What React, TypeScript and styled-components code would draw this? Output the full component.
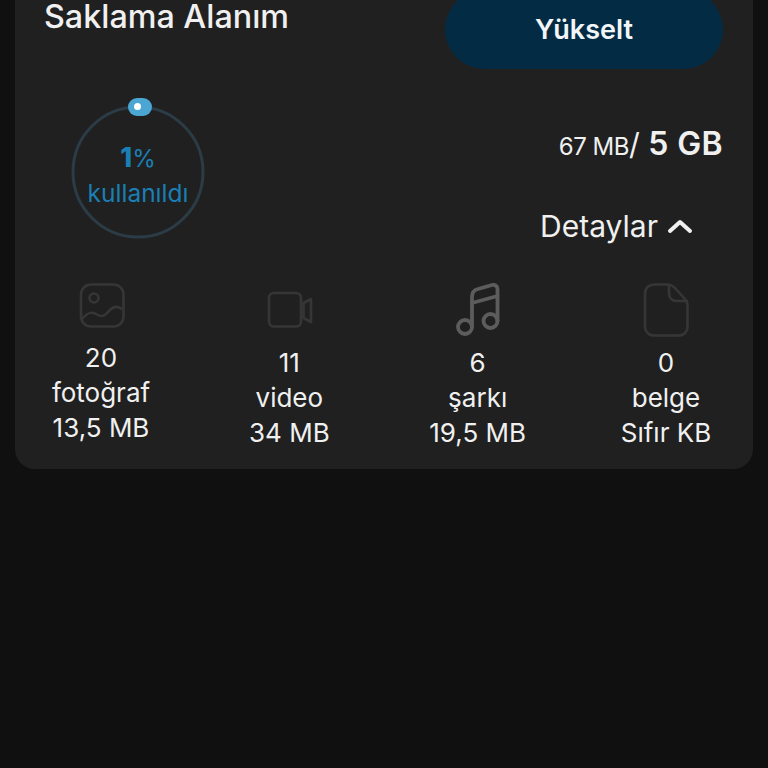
import React from 'react';
import styled, { createGlobalStyle } from 'styled-components';

const GlobalStyle = createGlobalStyle`
  html, body {
    margin: 0;
    height: 768px;
    overflow: hidden;
    background: #101010;
    font-family: Inter, "Noto Sans", sans-serif;
  }
`;

const Page = styled.div`
  height: 768px;
  padding: 0 15px;
  box-sizing: border-box;
  overflow: hidden;
`;

const Card = styled.section`
  margin-top: -30px;
  height: 499px;
  box-sizing: border-box;
  padding-top: 20px;
  background: #202020;
  border-radius: 20px;
  color: #f0f0f0;
`;

const Header = styled.div`
  display: flex;
  justify-content: space-between;
  align-items: flex-start;
  padding: 0 30px 0 29px;
`;

const Title = styled.h2`
  margin: 11px 0 0;
  font-size: 32.3px;
  line-height: 32px;
  font-weight: 500;
  color: #f0f0f0;
`;

const UpgradeButton = styled.button`
  width: 278px;
  height: 79px;
  border: none;
  border-radius: 40px;
  background: #032c44;
  color: #f2f6f8;
  font-family: inherit;
  font-size: 27px;
  font-weight: 600;
  padding: 0;
`;

const UsageRow = styled.div`
  display: flex;
  justify-content: space-between;
  align-items: flex-start;
  padding: 36px 30px 0 56px;
`;

const Gauge = styled.div`
  position: relative;
  width: 134px;
  height: 134px;
  box-sizing: border-box;
  padding-top: 10px;
  display: flex;
  flex-direction: column;
  align-items: center;
  justify-content: center;
  color: #1a7fb5;
`;

const GaugeRing = styled.svg`
  position: absolute;
  inset: 0;
`;

const GaugeKnob = styled.span`
  position: absolute;
  top: -7px;
  left: 57px;
  width: 24px;
  height: 18px;
  border-radius: 9px;
  background: #4ca6d3;
  &::after {
    content: '';
    position: absolute;
    top: 5px;
    left: 6px;
    width: 7px;
    height: 7px;
    border-radius: 50%;
    background: #fff;
  }
`;

const Percent = styled.div`
  font-size: 24px;
  font-weight: 400;
  line-height: 30px;
  b {
    font-weight: 800;
    font-size: 27px;
  }
`;

const UsedLabel = styled.div`
  font-size: 24.5px;
  line-height: 38px;
`;

const UsageInfo = styled.div`
  display: flex;
  flex-direction: column;
  align-items: flex-end;
`;

const Amount = styled.div`
  margin-top: 17px;
  font-size: 30px;
  line-height: 44px;
`;

const AmountUsed = styled.span`
  font-size: 24px;
  letter-spacing: -0.5px;
`;

const AmountTotal = styled.span`
  font-size: 32px;
  font-weight: 600;
  letter-spacing: 0.4px;
`;

const Details = styled.div`
  display: flex;
  align-items: center;
  gap: 9px;
  margin: 35px 30px 0 0;
  font-size: 30px;
  line-height: 44px;
`;

const Stats = styled.div`
  display: flex;
  justify-content: space-between;
  align-items: flex-start;
  padding: 35px 27px 0 26px;
`;

const Stat = styled.div`
  width: 120px;
  display: flex;
  flex-direction: column;
  align-items: center;
  text-align: center;
  font-size: 26px;
  line-height: 35px;
  white-space: nowrap;
`;

const StatIcon = styled.svg<{ $tint: string }>`
  display: block;
  fill: none;
  stroke: ${(props) => props.$tint};
  stroke-linecap: round;
  stroke-linejoin: round;
`;

const stats = [
  {
    lines: ['20', 'fotoğraf', '13,5 MB'],
    icon: (
      <StatIcon $tint="#363636" width="48" height="57" viewBox="0 0 48 57" strokeWidth="2.6">
        <rect x="4" y="1.5" width="42.5" height="42" rx="10" />
        <circle cx="17" cy="15" r="4.5" />
        <path d="M5 36 C10 30 14 28 19 31 C24 34 27 34 31 29 C35 24 40 22 45 26" />
      </StatIcon>
    ),
  },
  {
    lines: ['11', 'video', '34 MB'],
    icon: (
      <StatIcon $tint="#363636" width="48" height="62" viewBox="0 0 48 62" strokeWidth="2.6">
        <rect x="4" y="10" width="32" height="33.5" rx="5" />
        <path d="M38.5 20 L46 16 V39 L38.5 35 Z" />
      </StatIcon>
    ),
  },
  {
    lines: ['6', 'şarkı', '19,5 MB'],
    icon: (
      <StatIcon $tint="#5c5c5c" width="46" height="62" viewBox="0 0 46 62" strokeWidth="3.8">
        <circle cx="10" cy="44" r="7" />
        <circle cx="35.5" cy="38" r="7" />
        <path d="M17 44 V14 C17 9 19 7 23 6 L37 2 C40 1.5 42.5 3 42.5 6 V38" />
        <path d="M17 20 L42.5 13" />
      </StatIcon>
    ),
  },
  {
    lines: ['0', 'belge', 'Sıfır KB'],
    icon: (
      <StatIcon $tint="#363636" width="46" height="62" viewBox="0 0 46 62" strokeWidth="2.6">
        <path d="M12 1.5 H25 C28 1.5 30 3 32 5 L41 15 C43 17 44.5 19 44.5 22 V43 C44.5 49 41 52.5 35 52.5 H12 C6 52.5 2 49 2 43 V11 C2 5 6 1.5 12 1.5 Z" />
        <path d="M26 2 V10 C26 15 29 18 34 18 H44" />
      </StatIcon>
    ),
  },
];

const App: React.FC = () => (
  <Page>
    <GlobalStyle />
    <Card>
      <Header>
        <Title>Saklama Alanım</Title>
        <UpgradeButton>Yükselt</UpgradeButton>
      </Header>
      <UsageRow>
        <Gauge>
          <GaugeRing width="134" height="134" viewBox="0 0 134 134">
            <circle cx="67" cy="67" r="65" fill="none" stroke="#2b3c46" strokeWidth="3" />
          </GaugeRing>
          <GaugeKnob />
          <Percent>
            <b>1</b>%
          </Percent>
          <UsedLabel>kullanıldı</UsedLabel>
        </Gauge>
        <UsageInfo>
          <Amount>
            <AmountUsed>67 MB</AmountUsed>/ <AmountTotal>5 GB</AmountTotal>
          </Amount>
          <Details>
            Detaylar
            <svg width="26" height="16" viewBox="0 0 26 16" fill="none" stroke="#f0f0f0" strokeWidth="4" strokeLinecap="round" strokeLinejoin="round">
              <path d="M3 13 L13 4 L23 13" />
            </svg>
          </Details>
        </UsageInfo>
      </UsageRow>
      <Stats>
        {stats.map((stat) => (
          <Stat key={stat.lines[1]}>
            {stat.icon}
            {stat.lines.map((line) => (
              <div key={line}>{line}</div>
            ))}
          </Stat>
        ))}
      </Stats>
    </Card>
  </Page>
);

export default App;
